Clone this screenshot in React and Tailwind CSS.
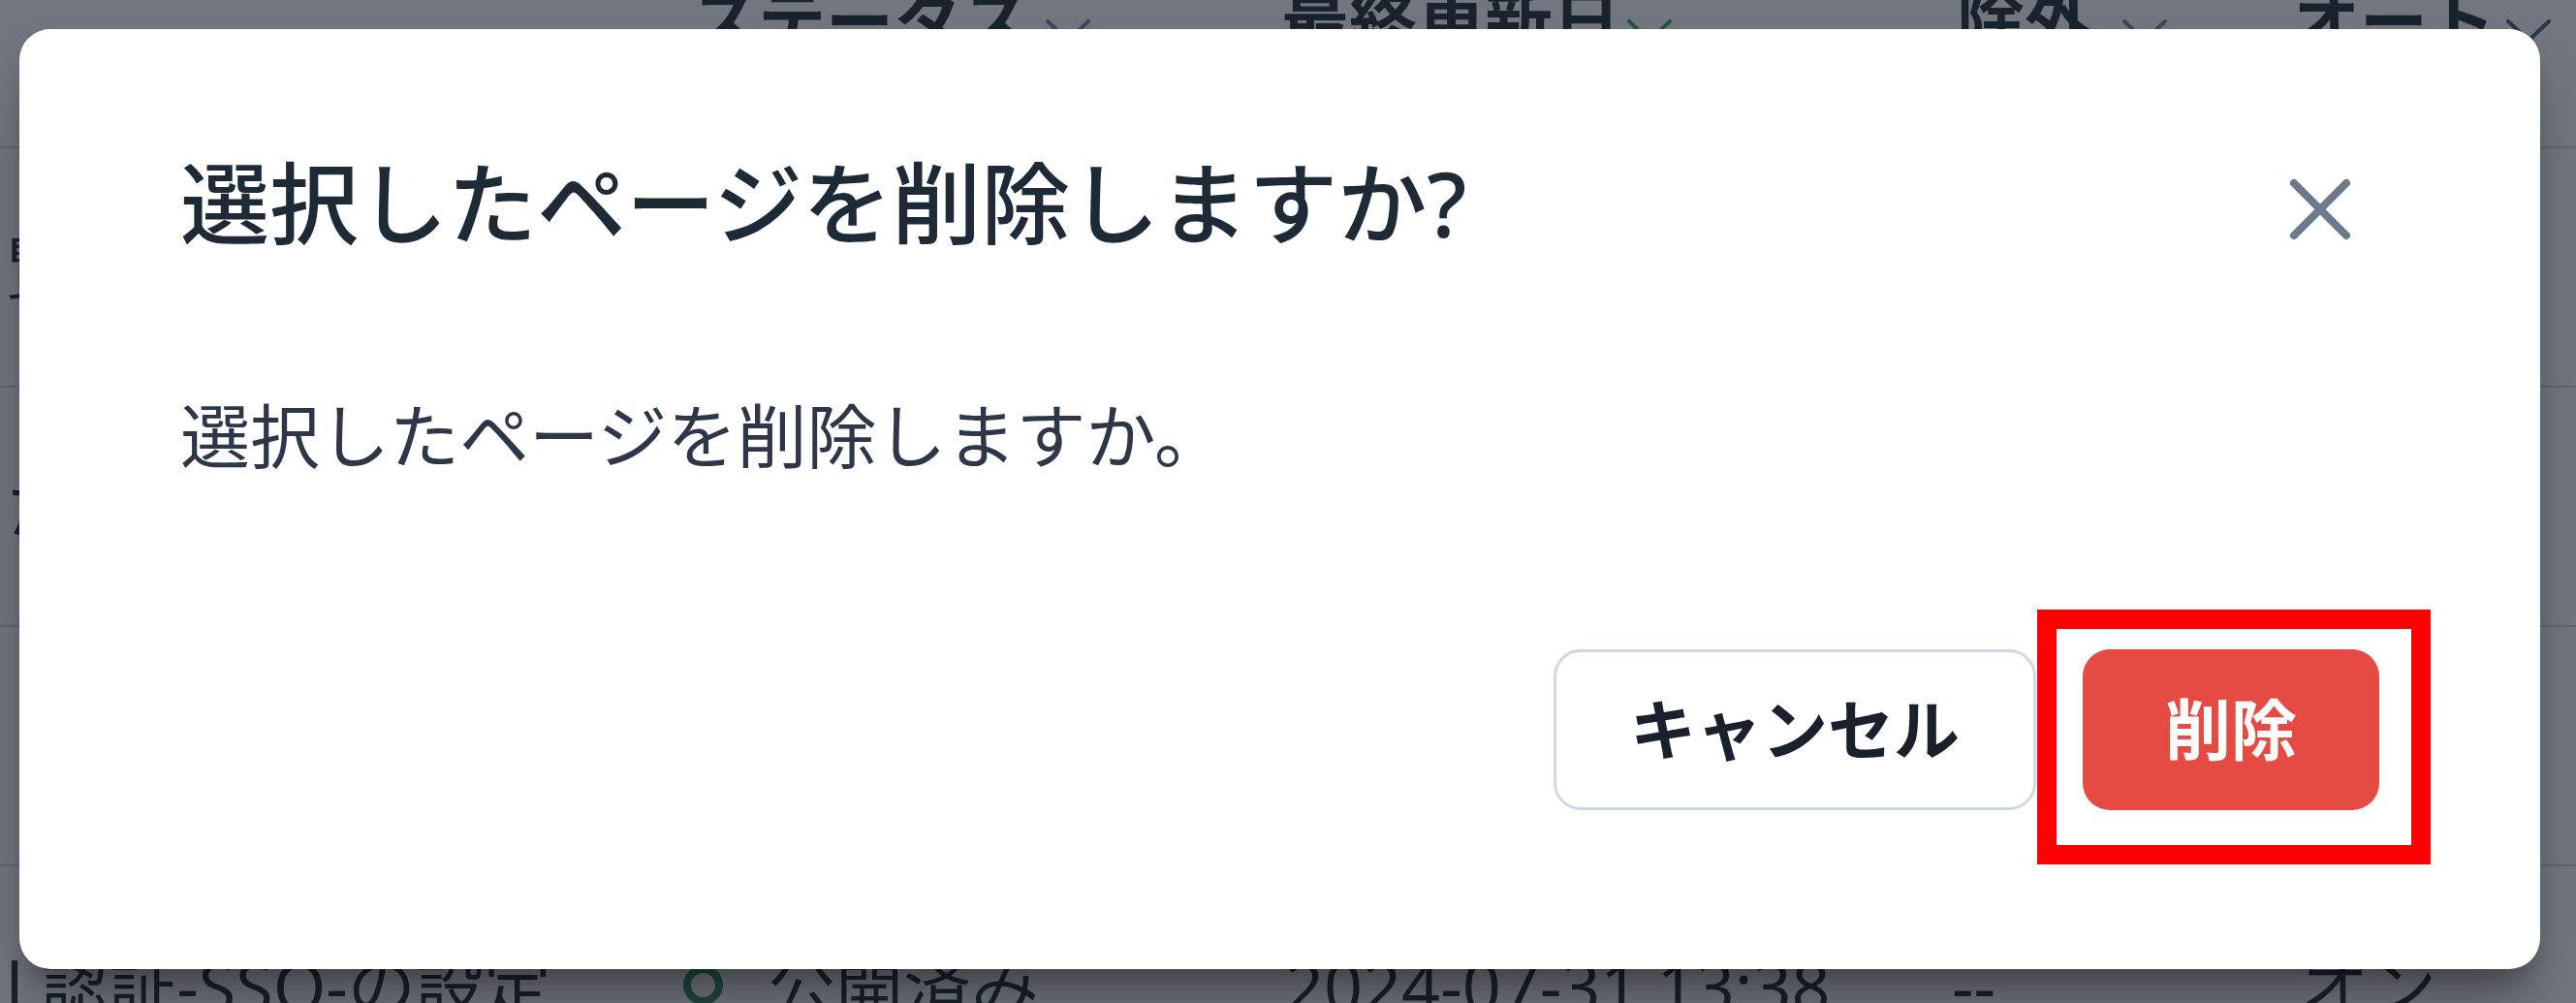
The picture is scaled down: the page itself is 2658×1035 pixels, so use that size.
import { X } from 'lucide-react';

const rows = [
  { name: '覧ページの表示設定', status: '公開済み', updated: '2024-07-31 13:38', excluded: '--', auto: 'オン' },
  { name: 'たとえばの設定について', status: '公開済み', updated: '2024-07-31 13:38', excluded: '--', auto: 'オン' },
  { name: '：アカウントの管理', status: '公開済み', updated: '2024-07-31 13:38', excluded: '--', auto: 'オン' },
  { name: 'l 認証-SSO-の設定', status: '公開済み', updated: '2024-07-31 13:38', excluded: '--', auto: 'オン' },
];

function Chevron({ className }) {
  return (
    <svg viewBox="0 0 48 26" className={className} fill="none" stroke="currentColor" strokeWidth="4" strokeLinecap="round" strokeLinejoin="round">
      <path d="M3 3l21 20L45 3" />
    </svg>
  );
}

function PageTable() {
  return (
    <div className="-mt-[110px] flex flex-col text-[#1a202c]">
      {/* header row, mostly hidden behind the dialog */}
      <div className="flex h-[263px] items-center border-b-2 border-[#cbd5e0] text-[70px] font-bold leading-none">
        <div className="w-[705px] shrink-0" />
        <div className="flex w-[617px] shrink-0 items-center gap-[16px] pl-[7px]">
          <span>ステータス</span>
          <Chevron className="mt-[22px] h-[26px] w-[48px] text-[#718096]" />
        </div>
        <div className="flex w-[692px] shrink-0 items-center gap-[6px]">
          <span>最終更新日</span>
          <Chevron className="mt-[22px] h-[26px] w-[48px] text-[#38a169]" />
        </div>
        <div className="flex w-[351px] shrink-0 items-center gap-[30px] pl-[5px]">
          <span>除外</span>
          <Chevron className="mt-[22px] h-[26px] w-[48px] text-[#718096]" />
        </div>
        <div className="flex shrink-0 items-center gap-[10px]">
          <span>オート</span>
          <Chevron className="mt-[22px] h-[26px] w-[48px] text-[#4a5568]" />
        </div>
      </div>

      {rows.map((row, i) => (
        <div key={i} className="flex h-[247px] items-center border-b-2 border-[#cbd5e0] text-[70px] leading-none">
          <div className="w-[705px] shrink-0 overflow-hidden whitespace-nowrap pl-[6px]">{row.name}</div>
          <div className="flex w-[617px] shrink-0 items-center gap-[46px]">
            <span className="h-[41px] w-[41px] rounded-full border-[8px] border-[#2f855a]" />
            <span>{row.status}</span>
          </div>
          <div className="w-[692px] shrink-0 pl-[4px]">{row.updated}</div>
          <div className="w-[351px] shrink-0">{row.excluded}</div>
          <div className="shrink-0 pl-[9px]">{row.auto}</div>
        </div>
      ))}
    </div>
  );
}

function DeleteDialog() {
  return (
    <div className="flex h-[970px] w-[2601px] flex-col rounded-[32px] bg-white px-[166px] pt-[105px] pb-[164px] shadow-[0_40px_60px_-12px_rgba(0,0,0,0.35),0_16px_24px_-8px_rgba(0,0,0,0.2)]">
      <div className="flex h-[150px] items-center justify-between">
        <h2 className="text-[92px] font-medium leading-none text-[#1f2a37]">選択したページを削除しますか?</h2>
        <button className="mt-[12px] mr-[7px] text-[#6b7b8c]">
          <X size={108} strokeWidth={1.8} />
        </button>
      </div>

      <div className="mt-[114px] flex h-[100px] items-center">
        <p className="text-[72px] leading-none text-[#2d3748]">選択したページを削除しますか。</p>
      </div>

      <div className="mt-[171px] flex h-[166px] justify-end gap-[48px]">
        <button className="flex h-[166px] w-[498px] items-center justify-center rounded-[28px] border-[3px] border-[#cfd8e3] bg-white text-[68px] font-bold leading-none text-[#1a202c]">
          キャンセル
        </button>
        <div className="relative">
          <button className="flex h-[166px] w-[306px] items-center justify-center rounded-[28px] bg-[#e64b43] text-[68px] font-bold leading-none text-white">
            削除
          </button>
          <span className="pointer-events-none absolute -left-[47px] -top-[41px] h-[263px] w-[406px] border-[20px] border-[#ff0000]" />
        </div>
      </div>
    </div>
  );
}

export default function App() {
  return (
    <div className="relative h-[1035px] w-[2658px] overflow-hidden bg-white font-['Noto_Sans','Noto_Sans_CJK_JP',sans-serif]">
      <PageTable />
      <div className="absolute inset-0 bg-[#1b2430]/62 pl-[20px] pt-[30px]">
        <DeleteDialog />
      </div>
    </div>
  );
}
